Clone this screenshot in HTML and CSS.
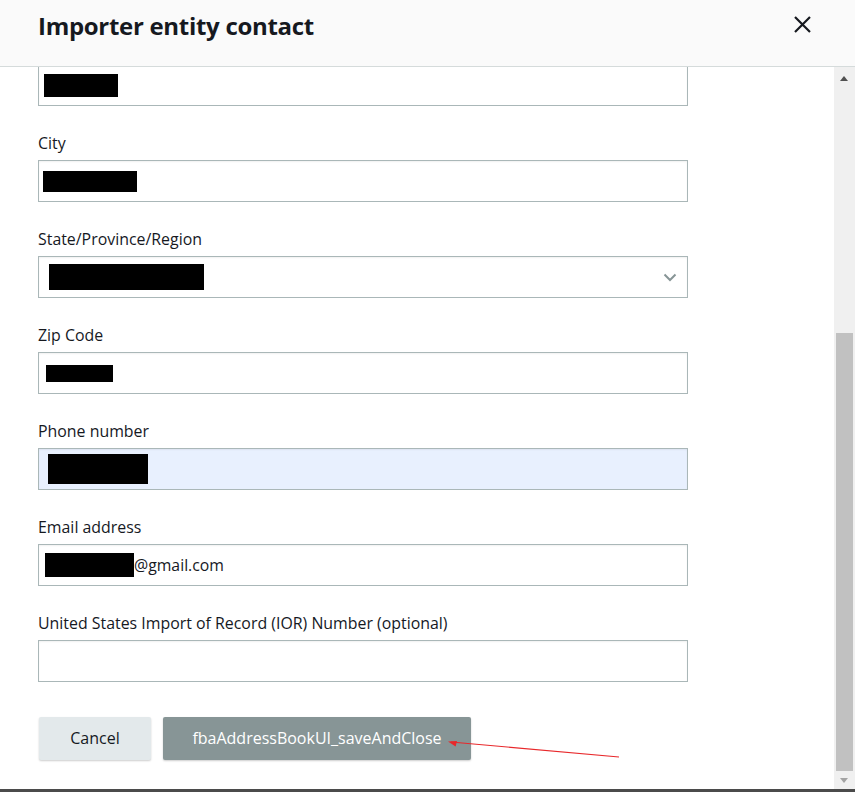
FILE: index.html
```html
<!DOCTYPE html>
<html>
<head>
<meta charset="utf-8">
<link rel="stylesheet" href="styles.css">
</head>
<body>
<div class="modal">
  <header class="header">
    <h1 class="title">Importer entity contact</h1>
    <button class="close" aria-label="Close">
      <svg width="17" height="17" viewBox="0 0 17 17"><path d="M1 1L16 16M16 1L1 16" stroke="#16191f" stroke-width="2.2" fill="none"/></svg>
    </button>
  </header>
  <div class="body">
    <div class="content">
      <div class="form">
        <div class="field first">
          <div class="input"><span class="redact" style="width:74px;height:23px;margin-left:5px"></span></div>
        </div>
        <div class="field">
          <label class="label">City</label>
          <div class="input"><span class="redact" style="width:94px;height:21px;margin-left:4px"></span></div>
        </div>
        <div class="field">
          <label class="label">State/Province/Region</label>
          <div class="input select"><span class="redact" style="width:155px;height:26px;margin-left:10px"></span>
            <svg class="chev" width="14" height="9" viewBox="0 0 14 9"><path d="M1.5 1.5L7 7L12.5 1.5" stroke="#879596" stroke-width="2" fill="none"/></svg>
          </div>
        </div>
        <div class="field">
          <label class="label">Zip Code</label>
          <div class="input"><span class="redact" style="width:67px;height:17px;margin-left:7px"></span></div>
        </div>
        <div class="field">
          <label class="label">Phone number</label>
          <div class="input autofill"><span class="redact" style="width:100px;height:30px;margin-left:9px"></span></div>
        </div>
        <div class="field">
          <label class="label">Email address</label>
          <div class="input"><span class="redact" style="width:89px;height:24px;margin-left:6px"></span><span class="value">@gmail.com</span></div>
        </div>
        <div class="field">
          <label class="label">United States Import of Record (IOR) Number (optional)</label>
          <div class="input"></div>
        </div>
        <div class="actions">
          <button class="btn cancel">Cancel</button>
          <button class="btn save">fbaAddressBookUI_saveAndClose</button>
        </div>
      </div>
      <svg class="arrow" width="180" height="24" viewBox="0 0 180 24">
        <path d="M172 19L4 4" stroke="#e8282b" stroke-width="1.2" fill="none"/>
        <path d="M1 3.5L10 3L8.6 8.5Z" fill="#e8282b"/>
      </svg>
    </div>
    <div class="scrollbar">
      <div class="sb-up"></div>
      <div class="sb-track"><div class="sb-thumb"></div></div>
      <div class="sb-down"></div>
    </div>
  </div>
  <div class="bottom-bar"></div>
</div>
</body>
</html>
```
FILE: styles.css
```css
* { box-sizing: border-box; }
html, body { margin: 0; padding: 0; }
body {
  width: 855px;
  height: 792px;
  overflow: hidden;
  background: #fff;
  font-family: "Open Sans", "Noto Sans", sans-serif;
  color: #16191f;
}
.modal {
  height: 792px;
  display: flex;
  flex-direction: column;
}
.header {
  height: 67px;
  flex: none;
  background: #fafafa;
  border-bottom: 1px solid #d5dbdb;
  display: flex;
  align-items: flex-start;
  justify-content: space-between;
  padding: 0 44px 0 38px;
}
.title {
  margin: 0;
  padding-top: 9px;
  font-family: "Open Sans", "Noto Sans", sans-serif;
  font-weight: 700;
  font-size: 24px;
  line-height: 34px;
  letter-spacing: -0.3px;
  color: #16191f;
}
.close {
  margin-top: 16px;
  padding: 0;
  border: 0;
  background: none;
  width: 17px;
  height: 17px;
  display: block;
}
.close svg { display: block; }
.body {
  flex: 1;
  display: flex;
  min-height: 0;
}
.content {
  flex: 1;
  position: relative;
  overflow: hidden;
}
.form {
  margin-top: -3px;
  padding-left: 38px;
  width: 688px;
}
.field { display: flex; flex-direction: column; }
.label {
  display: block;
  margin-top: 26px;
  margin-bottom: 6px;
  font-size: 15.9px;
  line-height: 22px;
  color: #16191f;
}
.input {
  height: 42px;
  border: 1px solid #aab7b8;
  box-shadow: inset 0 1px 2px rgba(0, 0, 0, 0.06);
  background: #fff;
  display: flex;
  align-items: center;
  position: relative;
}
.input.autofill { background: #e8f0fe; }
.redact { display: block; background: #000; flex: none; }
.value {
  font-size: 15.8px;
  color: #16191f;
  line-height: 20px;
}
.chev { position: absolute; right: 10px; top: 16px; }
.actions {
  display: flex;
  gap: 12px;
  margin-top: 35px;
  padding-left: 1px;
}
.btn {
  height: 43px;
  border: 0;
  border-radius: 2px;
  font-family: "Open Sans", "Noto Sans", sans-serif;
  font-size: 16px;
  padding: 0 0 2px;
  box-shadow: 0 1px 2px rgba(0, 0, 0, 0.2);
}
.cancel {
  width: 112px;
  background: #e3e9eb;
  color: #16191f;
}
.save {
  width: 308px;
  background: #879596;
  color: #fff;
}
.arrow {
  position: absolute;
  left: 447px;
  top: 671px;
}
.scrollbar {
  width: 21px;
  flex: none;
  background: #f0f0f0;
  display: flex;
  flex-direction: column;
  padding: 0 2px 0 2px;
}
.sb-up, .sb-down {
  height: 17px;
  flex: none;
  position: relative;
}
.sb-up::after {
  content: "";
  position: absolute;
  left: 4px;
  top: 9px;
  border-left: 4.5px solid transparent;
  border-right: 4.5px solid transparent;
  border-bottom: 5px solid #505050;
}
.sb-down::after {
  content: "";
  position: absolute;
  left: 4px;
  top: 6px;
  border-left: 4.5px solid transparent;
  border-right: 4.5px solid transparent;
  border-top: 5px solid #a3a3a3;
}
.sb-track { flex: 1; position: relative; }
.sb-thumb {
  position: absolute;
  left: 0;
  right: 0;
  top: 249px;
  bottom: 1px;
  background: #c1c1c1;
}
.bottom-bar {
  height: 3px;
  flex: none;
  background: #4b4b4b;
}
```
